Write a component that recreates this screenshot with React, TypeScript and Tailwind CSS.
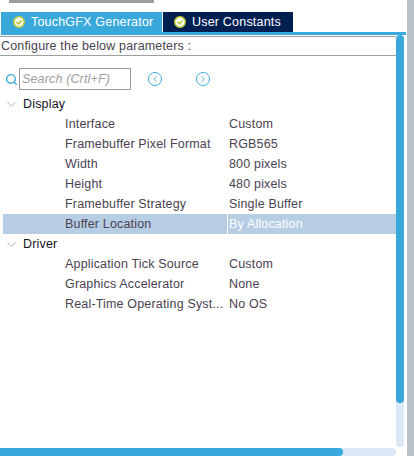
import React from "react";
import { ChevronDown, ChevronLeft, ChevronRight, Search } from "lucide-react";

type Param = { label: string; value: string; selected?: boolean };

const groups: Array<{ title: string; params: Param[] }> = [
  {
    title: "Display",
    params: [
      { label: "Interface", value: "Custom" },
      { label: "Framebuffer Pixel Format", value: "RGB565" },
      { label: "Width", value: "800 pixels" },
      { label: "Height", value: "480 pixels" },
      { label: "Framebuffer Strategy", value: "Single Buffer" },
      { label: "Buffer Location", value: "By Allocation", selected: true },
    ],
  },
  {
    title: "Driver",
    params: [
      { label: "Application Tick Source", value: "Custom" },
      { label: "Graphics Accelerator", value: "None" },
      { label: "Real-Time Operating Syst...", value: "No OS" },
    ],
  },
];

const TabCheck = () => (
  <svg width="12" height="12" viewBox="0 0 12 12" className="shrink-0">
    <circle cx="6" cy="6" r="5.2" fill="#ffffff" stroke="#c3cf3a" strokeWidth="1.6" />
    <path d="M3.4 6 L5.4 7.9 L8.6 4.4" fill="none" stroke="#b3c02c" strokeWidth="1.5" />
  </svg>
);

const NavButton = ({ right }: { right?: boolean }) => (
  <div className="w-[14px] h-[14px] rounded-full border border-[#39a9dc] flex items-center justify-center">
    {right ? (
      <ChevronRight size={10} strokeWidth={2} className="text-[#39a9dc]" />
    ) : (
      <ChevronLeft size={10} strokeWidth={2} className="text-[#39a9dc]" />
    )}
  </div>
);

export default function App() {
  return (
    <div className="w-[414px] h-[456px] flex bg-white overflow-hidden text-[12.5px] tracking-[0.17px] text-[#4a4250] font-['Liberation_Sans',Arial,sans-serif]">
      <div className="w-[407px] flex flex-col">
        <div className="pl-[9px] h-[12px]">
          <div className="w-[145px] h-[3px] bg-[#999ea3]" />
        </div>

        <div className="flex h-[20px] pl-[1px] gap-[1px] text-white tracking-[0.2px] whitespace-nowrap">
          <div className="w-[161px] bg-[#39a9dc] flex items-center gap-[6px] pl-[12px]">
            <TabCheck />
            <span>TouchGFX Generator</span>
          </div>
          <div className="w-[130px] bg-[#002052] flex items-center gap-[6px] pl-[11px]">
            <TabCheck />
            <span>User Constants</span>
          </div>
        </div>
        <div className="h-[3px] mx-[1px] bg-[#39a9dc]" />

        <div className="flex-1 flex min-h-0">
          <div className="w-[396px] flex flex-col">
            <div className="flex-1 min-h-0 flex flex-col">
              <div className="h-[20px] mt-[1px] border-y border-x-0 border-[#a0a0a0] pl-[1px] flex items-center whitespace-nowrap">
                Configure the below parameters :
              </div>

              <div className="flex items-center mt-[12px] h-[22px] pl-[5px]">
                <Search size={13} strokeWidth={2.5} className="text-[#39a9dc] mr-[1px]" />
                <div className="w-[112px] h-[22px] border border-[#999999] pl-[2px] flex items-center italic text-[#a0a0a0] tracking-[0.15px]">
                  Search (Crtl+F)
                </div>
                <div className="ml-[17px]">
                  <NavButton />
                </div>
                <div className="ml-[34px]">
                  <NavButton right />
                </div>
              </div>

              <div className="mt-[4px]">
                {groups.map((group) => (
                  <div key={group.title}>
                    <div className="h-[20px] flex items-center text-[#14141e]">
                      <ChevronDown size={15} strokeWidth={1} className="ml-[4px] mr-[4px] text-[#8a8a8a]" />
                      <span>{group.title}</span>
                    </div>
                    {group.params.map((param) => (
                      <div
                        key={param.label}
                        className={
                          param.selected
                            ? "h-[20px] ml-[3px] flex items-center bg-[#b6cde3]"
                            : "h-[20px] ml-[3px] flex items-center"
                        }
                      >
                        <div className="w-[224px] pl-[62px] whitespace-nowrap">{param.label}</div>
                        <div
                          className={
                            param.selected
                              ? "flex-1 h-full pl-[1px] flex items-center border-l border-white text-white"
                              : "flex-1 h-full pl-[1px] flex items-center border-l border-transparent"
                          }
                        >
                          {param.value}
                        </div>
                      </div>
                    ))}
                  </div>
                ))}
              </div>
            </div>

            <div className="h-[8px] rounded-full bg-[#dae8f5]">
              <div className="w-[343px] h-full rounded-r-full bg-[#39a9dc]" />
            </div>
          </div>

          <div className="w-[8px] h-[412px] rounded-full bg-[#dae8f5]">
            <div className="h-[368px] rounded-full bg-[#39a9dc]" />
          </div>
        </div>
      </div>
      <div className="w-[7px] bg-[#b8c2c9]" />
    </div>
  );
}
